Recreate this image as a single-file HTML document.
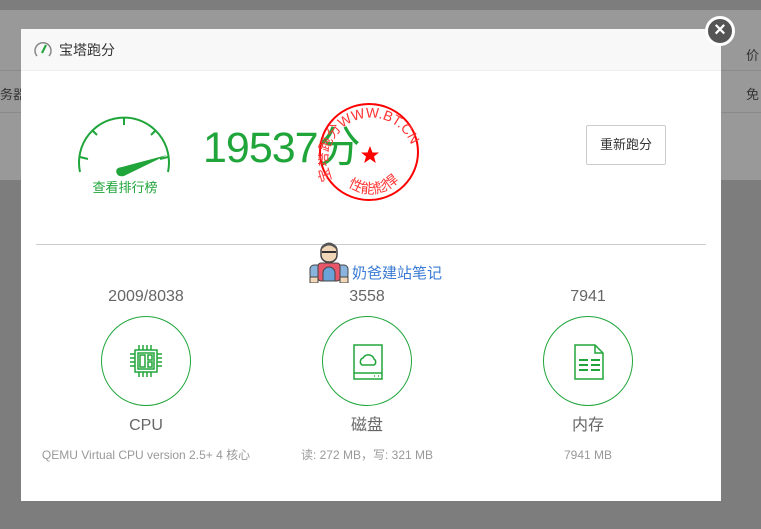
<!DOCTYPE html>
<html><head><meta charset="utf-8"><style>
*{margin:0;padding:0;box-sizing:border-box}
body{width:761px;height:529px;overflow:hidden;background:#7d7d7d;font-family:"Liberation Sans","Noto Sans CJK SC",sans-serif;position:relative}
.bg1{position:absolute;left:0;top:10px;width:761px;height:170px;background:#999}
.ln{position:absolute;left:0;width:761px;height:1px;background:#8a8a8a}
.m{position:absolute;left:21px;top:29px;width:700px;height:472px;background:#fff}
.hd{height:42px;background:#f8f8f8;border-bottom:1px solid #eee;font-size:14px;color:#333;line-height:42px;padding-left:38px;position:relative}
.t{position:absolute;text-align:center;line-height:20px}
.c{position:absolute;width:90px;height:90px;border:1px solid #20a53a;border-radius:50%}
</style></head><body>
<div class="bg1"></div>
<div class="ln" style="top:70px"></div><div class="ln" style="top:112px"></div>
<div style="position:absolute;left:0;top:84px;font-size:13px;color:#333">务器</div>
<div style="position:absolute;left:746px;top:45px;font-size:13px;color:#333">价</div>
<div style="position:absolute;left:746px;top:84px;font-size:13px;color:#333">免</div>
<div class="m">
<div class="hd"><svg style="position:absolute;left:11px;top:10px" width="22" height="20" viewBox="0 0 22 20"><path d="M5 17 A8 8 0 1 1 17 17" fill="none" stroke="#888" stroke-width="1.5"/><path d="M10 14 L14 6" stroke="#20a53a" stroke-width="2"/></svg>宝塔跑分</div>
<svg style="position:absolute;left:55px;top:87px" width="100" height="70" viewBox="0 0 100 70">
<path d="M4 56 A45 45 0 1 1 92 56" fill="none" stroke="#20a53a" stroke-width="2"/>
<g stroke="#20a53a" stroke-width="2"><path d="M48 1 v8"/><path d="M16 14 l5 5"/><path d="M80 14 l-5 5"/><path d="M4 41 l8 2"/><path d="M92 41 l-8 2"/></g>
<path d="M41 58 Q38 52 46 51 L91 39 L48 60 Q43 61 41 58Z" fill="#20a53a"/></svg>
<div class="t" style="left:59px;top:149px;width:90px;font-size:13px;color:#20a53a">查看排行榜</div>
<div style="position:absolute;left:182px;top:94px;font-size:43px;line-height:50px;color:#20a53a;letter-spacing:-1px">19537分</div>
<svg style="position:absolute;left:297px;top:73px" width="104" height="104" viewBox="0 0 104 104">
<defs><path id="ta" d="M14 78 A40 40 0 0 1 92 40"/><path id="tb" d="M30 84 A38 38 0 0 0 90 60"/></defs>
<ellipse cx="51" cy="50" rx="49" ry="48" fill="none" stroke="#f00" stroke-width="2"/>
<path d="M52 44 l2.5 6.5 6.5 0 -5 4 1.8 6.5 -5.8 -4 -5.8 4 1.8 -6.5 -5 -4 6.5 0z" fill="#f00"/>
<text font-size="14" fill="#f33"><textPath href="#ta">宝塔跑分WWW.BT.CN</textPath></text>
<text font-size="14" fill="#f33"><textPath href="#tb">性能彪悍</textPath></text></svg>
<div class="t" style="left:565px;top:96px;width:80px;height:40px;border:1px solid #ccc;border-radius:2px;line-height:38px;font-size:13px;color:#333">重新跑分</div>
<div style="position:absolute;left:15px;top:215px;width:670px;height:1px;background:#ccc"></div>
<svg style="position:absolute;left:288px;top:212px" width="40" height="42" viewBox="0 0 40 42">
<rect x="1" y="24" width="38" height="14" rx="4" fill="#8ab4de" stroke="#444"/>
<rect x="9" y="22" width="22" height="18" rx="3" fill="#e8566a" stroke="#444"/>
<path d="M14 40 v-8 a6 6 0 0 1 12 0 v8z" fill="#6aa3d8" stroke="#444"/>
<rect x="12" y="3" width="16" height="18" rx="7" fill="#f2d6b8" stroke="#444" stroke-width="1.5"/>
<path d="M12 9 Q20 0 28 9 L28 6 Q20 -3 12 6Z" fill="#555"/>
<path d="M13 11 h14" stroke="#333" stroke-width="2"/>
<rect x="1" y="36" width="8" height="6" fill="#f2d6b8" stroke="#444"/><rect x="31" y="36" width="8" height="6" fill="#f2d6b8" stroke="#444"/></svg>
<div style="position:absolute;left:331px;top:233px;font-size:15px;color:#3a7bd5">奶爸建站笔记</div>
<div class="t" style="left:65px;top:258px;width:120px;font-size:16px;color:#666">2009/8038</div>
<div class="t" style="left:286px;top:258px;width:120px;font-size:16px;color:#666">3558</div>
<div class="t" style="left:507px;top:258px;width:120px;font-size:16px;color:#666">7941</div>
<div class="c" style="left:80px;top:287px"><svg style="position:absolute;left:27px;top:27px" width="34" height="34" viewBox="0 0 34 34" fill="none" stroke="#20a53a" stroke-width="1.5"><rect x="6" y="6" width="22" height="22"/><rect x="9" y="9" width="16" height="16"/><rect x="11" y="11" width="5" height="12"/><rect x="19" y="11" width="4" height="5"/><rect x="19" y="18" width="4" height="5"/><path d="M10 1v5M14 1v5M18 1v5M22 1v5M10 28v5M14 28v5M18 28v5M22 28v5M1 10h5M1 14h5M1 18h5M1 22h5M28 10h5M28 14h5M28 18h5M28 22h5"/></svg></div>
<div class="c" style="left:301px;top:287px"><svg style="position:absolute;left:28px;top:26px" width="34" height="38" viewBox="0 0 34 38" fill="none" stroke="#20a53a" stroke-width="1.5"><path d="M3 2h28v34H3z"/><path d="M3 30h28"/><path d="M11 22a4 4 0 0 1 1-7 6 6 0 0 1 11 1 3.5 3.5 0 0 1 0 6z"/><path d="M23 33h1M27 33h1"/></svg></div>
<div class="c" style="left:522px;top:287px"><svg style="position:absolute;left:28px;top:26px" width="34" height="38" viewBox="0 0 34 38" fill="none" stroke="#20a53a" stroke-width="1.5"><path d="M3 2h20l8 8v26H3z"/><path d="M23 2v8h8" /><path d="M7 17h9M19 17h9M7 22h9M19 22h9M7 27h9M19 27h9" stroke-width="2"/></svg></div>
<div class="t" style="left:65px;top:387px;width:120px;font-size:16px;color:#666">CPU</div>
<div class="t" style="left:286px;top:387px;width:120px;font-size:16px;color:#666">磁盘</div>
<div class="t" style="left:507px;top:387px;width:120px;font-size:16px;color:#666">内存</div>
<div class="t" style="left:5px;top:416px;width:240px;font-size:12px;color:#999">QEMU Virtual CPU version 2.5+ 4 核心</div>
<div class="t" style="left:256px;top:416px;width:180px;font-size:12px;color:#999">读: 272 MB，写: 321 MB</div>
<div class="t" style="left:507px;top:416px;width:120px;font-size:12px;color:#999">7941 MB</div>
</div>
<div style="position:absolute;left:705px;top:16px;width:30px;height:30px;border-radius:50%;background:#555;border:3px solid #fff;color:#fff;text-align:center;line-height:23px;font-size:20px;font-weight:bold">×</div>
</body></html>
